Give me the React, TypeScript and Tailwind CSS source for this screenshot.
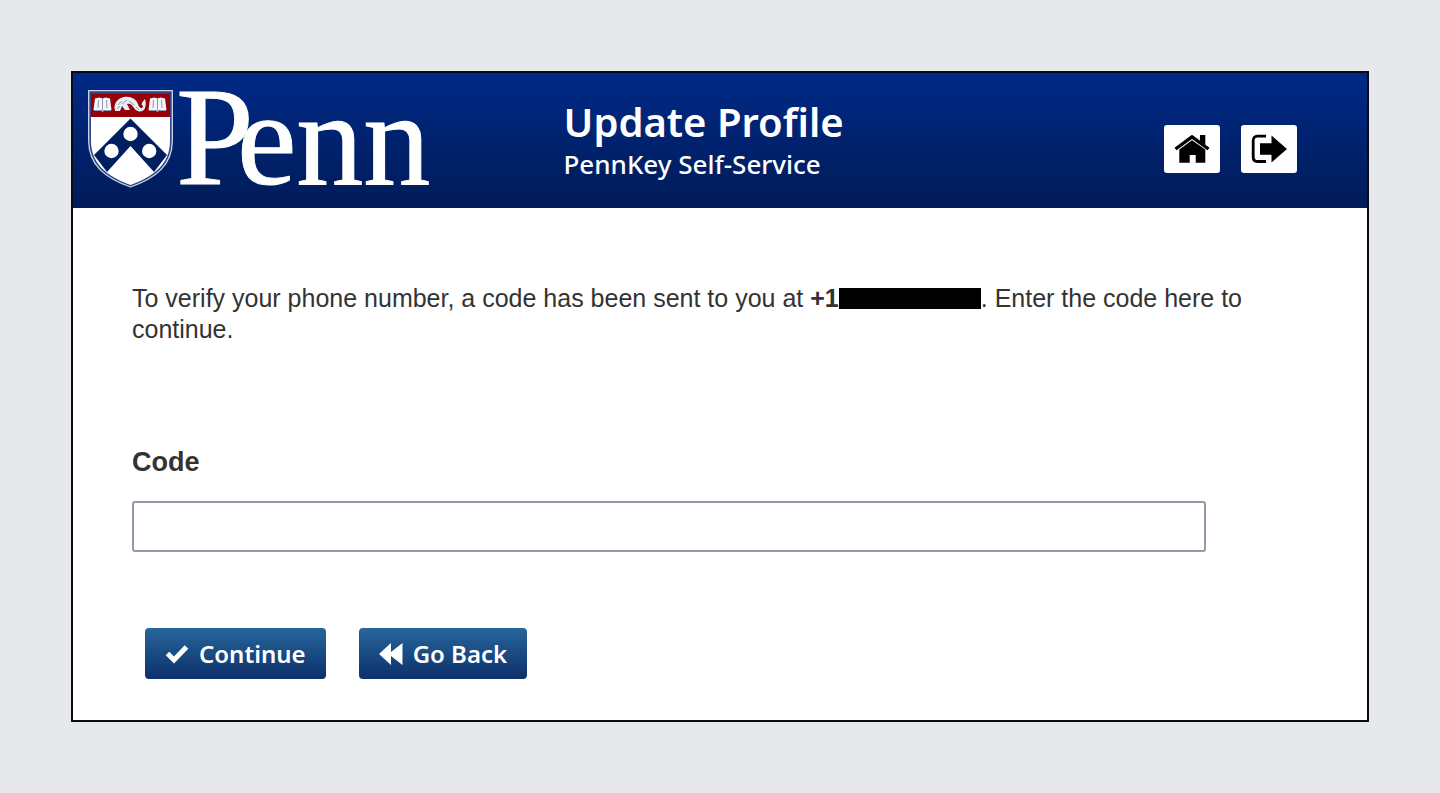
import React from "react";

function PennLogo() {
  return (
    <svg viewBox="0 0 346 98" className="h-[98px] w-[346px] overflow-visible" role="img" aria-label="Penn">
      <defs>
        <clipPath id="shield">
          <path d="M3 3H82V50C82 72 67 85 42.500 94C18 85 3 72 3 50Z" />
        </clipPath>
        <g id="book">
          <path d="M1 2.500L5.500 1.500L8.500 2.500L11.500 1.500L16 2.500L17.500 14H10.500L8.500 15L6.500 14H-.5Z" fill="#f3f5fa" />
          <path d="M8.500 2.500V14M4.500 4L4 12M12.500 4L13 12M0 14.500H6.500L8.500 15.500L10.500 14.500H17" fill="none" stroke="#8d98b8" strokeWidth="1" />
        </g>
      </defs>
      <path d="M.7 -.3H84.300V50C84.300 74 68 87 42.500 96C17 87 .7 74 .7 50Z" fill="#2d4584" stroke="#d0d7ea" strokeWidth="1.300" />
      <g clipPath="url(#shield)">
        <rect x="2" y="1" width="82" height="96" fill="#fff" />
        <rect x="2" y="1" width="82" height="25" fill="#950009" />
        <path d="M42.500 27.500L79 64L66 81L42.500 55L19 81L6 64Z" fill="#001f60" />
        <circle cx="42.500" cy="43" r="7.200" fill="#fff" />
        <circle cx="23.500" cy="60" r="7.200" fill="#fff" />
        <circle cx="61.200" cy="60" r="7.200" fill="#fff" />
      </g>
      <use href="#book" x="6" y="5" />
      <use href="#book" x="61" y="5" />
      <path d="M27 19C25 14 29 7 36 6C43 5 48 8 50 13C51 17 54 19 55 15C53 14 53 12 57 8C58 11 58 14 57 17C56 21 49 22 46 17C44 13 41 12 39 13L42 19H37L34 15L32 20H27Z" fill="#e9edf5" />
      <path d="M30 14L34 10M34 13L39 9M41 10L46 14M29 18L32 15M48 16L51 19" fill="none" stroke="#8d98b8" strokeWidth="1" />
      <text x="88" y="93" fontSize="140" fill="#fff" stroke="#fff" strokeWidth="1" fontFamily="'Liberation Serif', serif">
        P<tspan dx="-17" fontSize="134">enn</tspan>
      </text>
    </svg>
  );
}

function HomeIcon() {
  return (
    <svg viewBox="0 0 36 30" className="h-[30px] w-9" aria-hidden="true">
      <path d="M1.500 15L18 2.800L34.500 15" fill="none" stroke="#000" strokeWidth="3.400" />
      <path d="M26 1H31.300V11L26 7Z" />
      <path d="M5.300 15.500L18 6.200L31.300 15.500V28.700H21.700V21H15.700V28.700H5.300Z" />
    </svg>
  );
}

function SignOutIcon() {
  return (
    <svg viewBox="0 0 36 30" className="h-[30px] w-9" aria-hidden="true">
      <path d="M15 2.200H6.500Q2.200 2.200 2.200 7V23Q2.200 27.500 6.500 27.500H15" fill="none" stroke="#000" strokeWidth="2.800" />
      <path d="M9 9.300H20.500V1.500L36 15L20.500 28.500V20.700H9Z" />
    </svg>
  );
}

function CheckIcon() {
  return (
    <svg viewBox="0 0 24 20" className="h-5 w-6" aria-hidden="true">
      <path d="M2.500 9.500L9 16L21.500 3" fill="none" stroke="#fff" strokeWidth="5" />
    </svg>
  );
}

function BackIcon() {
  return (
    <svg viewBox="0 0 24 22" className="h-[22px] w-6" fill="#fff" aria-hidden="true">
      <path d="M0 11L12 0V9L23.500 0V22L12 13V22Z" />
    </svg>
  );
}

const actionClass =
  "flex h-[51px] items-center gap-2.5 rounded-[4px] bg-linear-to-b from-[#28669b] to-[#0e306b] px-5 font-['Noto_Sans',sans-serif] text-[24px] font-semibold text-white";

export default function App() {
  return (
    <div className="min-h-screen bg-[#e7e8ec] p-[71px] font-['Liberation_Sans',sans-serif] text-[#333]">
      <main className="border-2 border-[#080c16] bg-white">
        <header className="flex items-center bg-linear-to-b from-[#002a87] to-[#001b58] pt-[18px] pr-[70px] pb-[19px] pl-[15px]">
          <div className="w-[39%] shrink-0">
            <PennLogo />
          </div>
          <div className="grow pl-1 font-['Noto_Sans',sans-serif] text-white">
            <h1 className="text-[40px] leading-[48px] font-semibold">Update Profile</h1>
            <p className="text-[26px] leading-9 font-medium">PennKey Self-Service</p>
          </div>
          <nav className="flex gap-[21px] pt-[18px]" aria-label="Account">
            <a href="#home" aria-label="Home" className="flex h-12 w-14 items-center justify-center rounded-[3px] bg-white">
              <HomeIcon />
            </a>
            <a href="#logout" aria-label="Log out" className="flex h-12 w-14 items-center justify-center rounded-[3px] bg-white">
              <SignOutIcon />
            </a>
          </nav>
        </header>
        <form className="px-[59px] pt-[75px] pb-[41px]" onSubmit={(e) => e.preventDefault()}>
          <p className="text-[25px] leading-[31px]">
            To verify your phone number, a code has been sent to you at <b>+1</b>
            <span className="inline-block h-[21px] w-[142px] bg-black align-[-2px]" />. Enter the code here to continue.
          </p>
          <label htmlFor="code" className="mt-[101px] block text-[27px] leading-8 font-bold">
            Code
          </label>
          <div className="pt-[23px] pr-[102px]">
            <input id="code" type="text" className="block h-[51px] w-full rounded-[3px] border-2 border-[#9a98a8] bg-white px-3 text-[25px]" />
          </div>
          <div className="mt-[76px] flex gap-[33px] pl-[13px]">
            <button type="submit" className={actionClass}>
              <CheckIcon />
              Continue
            </button>
            <button type="button" className={actionClass}>
              <BackIcon />
              Go Back
            </button>
          </div>
        </form>
      </main>
    </div>
  );
}
